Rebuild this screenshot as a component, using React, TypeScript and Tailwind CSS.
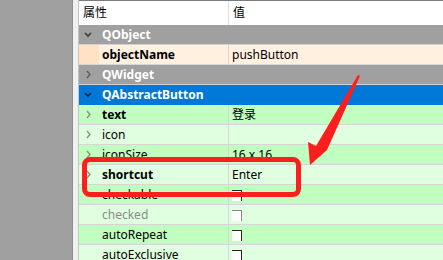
import React from "react";

type Row = {
  label: string;
  kind: "group" | "blue" | "peach" | "prop";
  open?: boolean;
  value?: string;
  bold?: boolean;
  dark?: boolean;
  expand?: boolean;
  checkbox?: boolean;
  disabled?: boolean;
};

const rows: Row[] = [
  { label: "QObject", kind: "group", open: true },
  { label: "objectName", kind: "peach", value: "pushButton", bold: true },
  { label: "QWidget", kind: "group", open: false },
  { label: "QAbstractButton", kind: "blue", open: true },
  { label: "text", kind: "prop", value: "登录", bold: true, dark: true, expand: true },
  { label: "icon", kind: "prop", value: "", dark: false, expand: true },
  { label: "iconSize", kind: "prop", value: "16 x 16", dark: true, expand: true },
  { label: "shortcut", kind: "prop", value: "Enter", bold: true, dark: false, expand: true },
  { label: "checkable", kind: "prop", checkbox: true, dark: true },
  { label: "checked", kind: "prop", checkbox: true, disabled: true, dark: false },
  { label: "autoRepeat", kind: "prop", checkbox: true, dark: true },
  { label: "autoExclusive", kind: "prop", checkbox: true, dark: false },
];

function Chevron({ open, color }: { open: boolean; color: string }) {
  return (
    <svg width="20" height="19" viewBox="0 0 20 19" className="block">
      {open ? (
        <polyline points="6,8 9,11 12,8" fill="none" stroke={color} strokeWidth="1.6" />
      ) : (
        <polyline points="8,6 11,9.5 8,13" fill="none" stroke={color} strokeWidth="1.4" />
      )}
    </svg>
  );
}

function Checkbox({ disabled }: { disabled?: boolean }) {
  return (
    <div
      className={
        "mt-[5px] h-[11px] w-[10px] self-start bg-white border-t-[1.5px] border-r-[1.5px] " +
        (disabled ? "border-[#8a8a8a]" : "border-[#222222]")
      }
    />
  );
}

function TableRow({ row }: { row: Row }) {
  if (row.kind === "group" || row.kind === "blue") {
    const blue = row.kind === "blue";
    return (
      <div
        className={
          "flex h-[20px] shrink-0 border-b " +
          (blue ? "bg-[#0078d7] border-[#0078d7]" : "bg-[#a0a0a0] border-[#d2d2d2]")
        }
      >
        <div className="w-[20px] shrink-0">
          <Chevron open={!!row.open} color={blue ? "#14233a" : row.open ? "#3a3a3a" : "#5e5e5e"} />
        </div>
        <div className="flex items-center pl-[3px] text-[12px] font-bold leading-none text-white">
          {row.label}
        </div>
      </div>
    );
  }

  const peach = row.kind === "peach";
  const bg = peach ? "bg-[#fff0e0]" : row.dark ? "bg-[#c0ffc0]" : "bg-[#e0ffe0]";
  const strip = peach ? "bg-[#ffe2c4]" : "";

  return (
    <div className={"flex h-[20px] shrink-0 border-b border-[#d6d6d6] " + bg}>
      <div className="flex w-[150px] shrink-0 border-r border-[#d6d6d6]">
        <div className={"w-[20px] shrink-0 " + strip}>
          {row.expand ? <Chevron open={false} color="#8c8c8c" /> : null}
        </div>
        <div
          className={
            "flex items-center pl-[3px] text-[12px] leading-none " +
            (row.bold ? "font-bold " : "") +
            (row.disabled ? "text-[#8a8a8a]" : "text-black")
          }
        >
          {row.label}
        </div>
      </div>
      <div className="flex flex-1 items-center pl-[3px] text-[12px] leading-none text-black">
        {row.checkbox ? <Checkbox disabled={row.disabled} /> : row.value}
      </div>
    </div>
  );
}

export default function App() {
  return (
    <div className="relative flex h-[260px] w-[443px] overflow-hidden bg-[#a0a0a0] font-['Noto_Sans','Noto_Sans_CJK_SC',sans-serif]">
      <div className="w-[73px] shrink-0 border-r border-[#8e8e8e] bg-[#a0a0a0]" />
      <div className="w-[5px] shrink-0 bg-[#f0f0f0]" />
      <div className="flex flex-1 flex-col border-l border-[#c4c4c4] bg-white">
        <div className="flex h-[25px] shrink-0 border-t border-[#7c7c7c] bg-white">
          <div className="flex w-[150px] shrink-0 items-center border-r border-[#dedede] pl-[4px] text-[12px] leading-none text-black">
            属性
          </div>
          <div className="flex flex-1 items-center pl-[4px] text-[12px] leading-none text-black">值</div>
        </div>
        {rows.map((r) => (
          <TableRow key={r.label} row={r} />
        ))}
      </div>

      <div className="absolute left-[82px] top-[157px] h-[40px] w-[219px] rounded-[8px] border-[5px] border-[#ff1e1e]" />

      <svg className="pointer-events-none absolute left-0 top-0" width="443" height="260" viewBox="0 0 443 260">
        <polygon points="358,75 360,76 327,150 310,165 308,142 316,146" fill="#ff1e1e" />
      </svg>
    </div>
  );
}
